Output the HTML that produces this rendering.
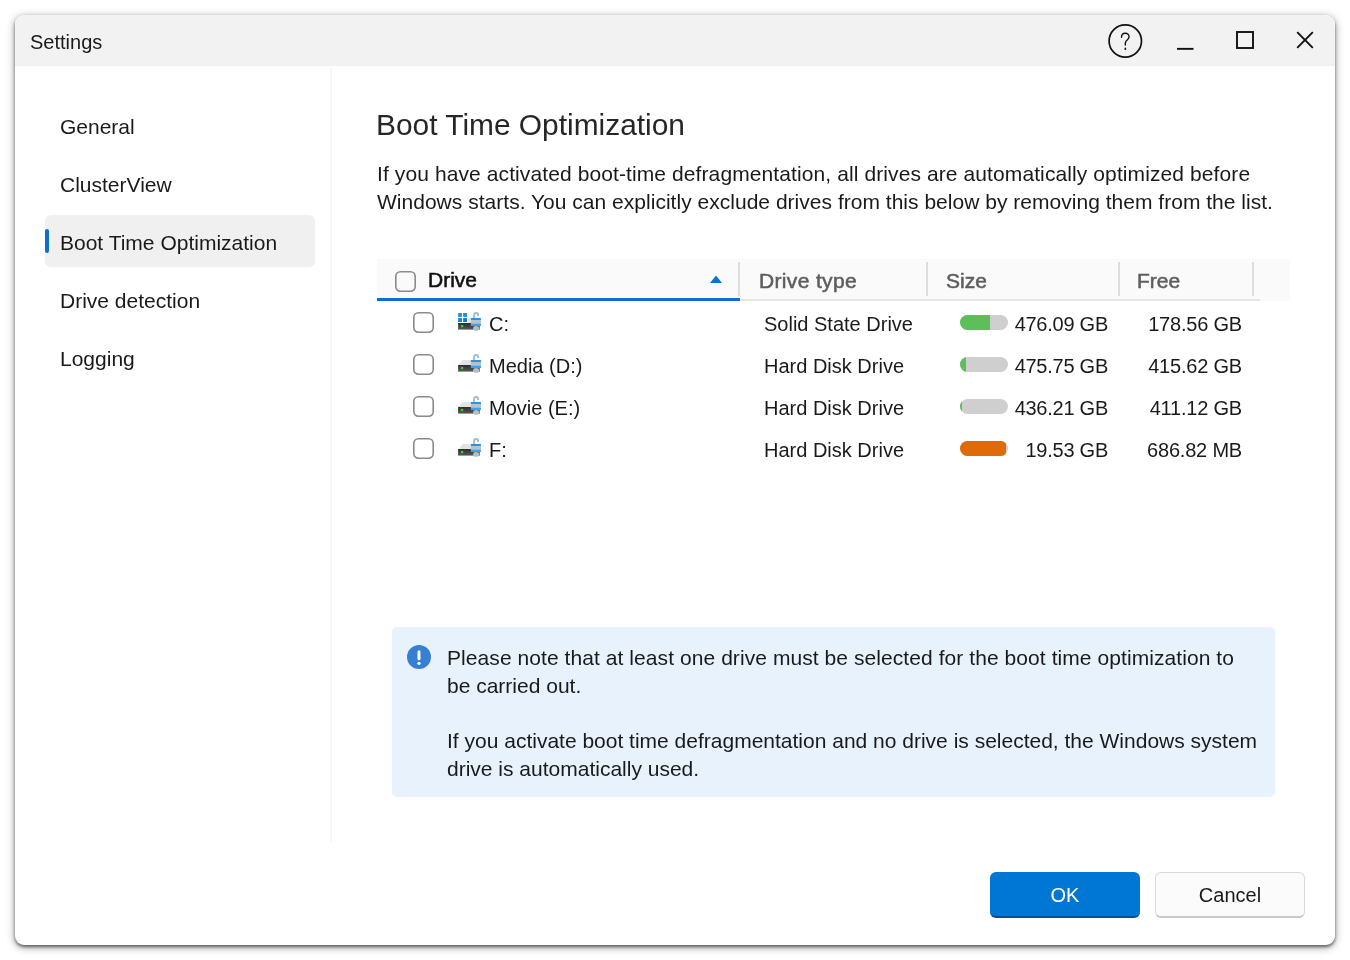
<!DOCTYPE html>
<html><head><meta charset="utf-8">
<style>
*{margin:0;padding:0;box-sizing:border-box}
html,body{width:1350px;height:960px;background:#fff;overflow:hidden;font-family:"Liberation Sans",sans-serif;color:#1a1a1a}
.abs{position:absolute;white-space:nowrap}
.t{will-change:transform}
#win{position:absolute;left:15px;top:15px;width:1320px;height:930px;border-radius:9px;background:#fff;
 box-shadow:0 2px 3px rgba(0,0,0,0.45),0 2px 8px rgba(0,0,0,0.42);overflow:hidden}
#title{position:absolute;left:0;top:0;width:1320px;height:51px;background:#f2f2f2}
.t{position:absolute;white-space:nowrap;line-height:28px}
.nav{font-size:21px}
.cb{position:absolute;width:22px;height:22px}.cb svg{display:block}
.cell{font-size:20px}
.sep{position:absolute;width:2px;top:247px;height:32px;background:#e2e2e2}
.bar{position:absolute;width:48px;height:15px;border-radius:7.5px;background:#cfcfcf;overflow:hidden}
.bar i{position:absolute;left:0;top:0;height:15px;display:block}
</style></head><body>
<div id="win">
  <div id="title"></div>
</div>
<!-- everything below positioned in page coords -->
<div class="t" style="left:30px;top:28px;font-size:20px">Settings</div>
<!-- title buttons -->
<svg class="abs" style="left:1100px;top:15px" width="240" height="51" viewBox="1100 15 240 51">
  <circle cx="1125.3" cy="41" r="16.2" fill="none" stroke="#111" stroke-width="1.7"/>
  <path d="M1121.5 37.3 c0 -2.4 1.6 -4.1 3.8 -4.1 c2.2 0 3.8 1.7 3.8 3.6 c0 1.4 -0.7 2.1 -1.7 3 c-1.3 1.1 -2.1 2 -2.1 3.5 v1.8" fill="none" stroke="#111" stroke-width="1.4" stroke-linecap="round"/>
  <rect x="1124.6" y="47.6" width="1.5" height="2.4" rx="0.6" fill="#111"/>
  <rect x="1177" y="47.9" width="16.5" height="1.9" fill="#111"/>
  <rect x="1237" y="32" width="16" height="16" fill="none" stroke="#111" stroke-width="1.9"/>
  <path d="M1297.2 32.2 L1312.8 47.8 M1312.8 32.2 L1297.2 47.8" stroke="#111" stroke-width="1.9"/>
</svg>

<!-- sidebar -->
<div class="abs" style="left:45px;top:215px;width:270px;height:52px;border-radius:6px;background:#f0f0f0"></div>
<div class="abs" style="left:45px;top:229px;width:4px;height:24px;border-radius:2px;background:#0a6fd1"></div>
<div class="t nav" style="left:59.5px;top:113px">General</div>
<div class="t nav" style="left:59.5px;top:171px">ClusterView</div>
<div class="t nav" style="left:59.5px;top:229px">Boot Time Optimization</div>
<div class="t nav" style="left:59.5px;top:287px">Drive detection</div>
<div class="t nav" style="left:59.5px;top:345px">Logging</div>
<div class="abs" style="left:330px;top:66px;width:2px;height:776px;background:#f7f7f7"></div>

<!-- heading -->
<div class="t" style="left:376px;top:107px;font-size:29.9px;line-height:36px;color:#262626">Boot Time Optimization</div>
<div class="t" style="left:377px;top:160px;font-size:21px;letter-spacing:0.1px">If you have activated boot-time defragmentation, all drives are automatically optimized before</div>
<div class="t" style="left:377px;top:188px;font-size:21px;letter-spacing:0.02px">Windows starts. You can explicitly exclude drives from this below by removing them from the list.</div>

<!-- table header -->
<div class="abs" style="left:377px;top:259px;width:913px;height:42px;background:#fafafa"></div>
<div class="abs" style="left:377px;top:298px;width:363px;height:3px;background:#0a6fd1"></div>
<div class="abs" style="left:740px;top:299px;width:520px;height:2px;background:#e5e5e5"></div>
<div class="cb" style="left:395px;top:271px"><svg width="22" height="22" viewBox="0 0 22 22"><rect x="0.8" y="0.8" width="19.4" height="19.4" rx="4.6" fill="#fafafa" stroke="#8a8a8a" stroke-width="1.6"/></svg></div>
<div class="t" style="left:428px;top:266px;font-size:21px;-webkit-text-stroke:0.55px #111;color:#111">Drive</div>
<svg class="abs" style="left:709px;top:274px" width="14" height="10"><path d="M1 9 L7 1.5 L13 9 Z" fill="#0a74d6"/></svg>
<div class="abs" style="left:738px;top:262px;width:2px;height:34px;background:#dedede"></div>
<div class="abs" style="left:926px;top:262px;width:2px;height:34px;background:#dedede"></div>
<div class="abs" style="left:1118px;top:262px;width:2px;height:34px;background:#dedede"></div>
<div class="abs" style="left:1252px;top:262px;width:2px;height:34px;background:#dedede"></div>
<div class="t" style="left:759px;top:267px;font-size:21px;-webkit-text-stroke:0.55px #5e5e5e;color:#5e5e5e;letter-spacing:0.35px">Drive type</div>
<div class="t" style="left:946px;top:267px;font-size:21px;-webkit-text-stroke:0.55px #5e5e5e;color:#5e5e5e">Size</div>
<div class="t" style="left:1137px;top:267px;font-size:21px;-webkit-text-stroke:0.55px #5e5e5e;color:#5e5e5e">Free</div>

<!-- rows -->
<!--ROWS-->
<div class="cb" style="left:413px;top:312px"><svg width="22" height="22" viewBox="0 0 22 22"><rect x="0.8" y="0.8" width="19.4" height="19.4" rx="4.6" fill="#fff" stroke="#8a8a8a" stroke-width="1.6"/></svg></div>
<svg class="abs" style="left:454px;top:308px" width="32" height="28" viewBox="0 0 32 28"><defs><linearGradient id="g0" x1="0" y1="0" x2="0" y2="1"><stop offset="0" stop-color="#2c2c2c"/><stop offset="1" stop-color="#5a5a5a"/></linearGradient></defs><rect x="4.1" y="5" width="3.9" height="3.9" fill="#1e93e3"/><rect x="9.1" y="5" width="3.9" height="3.9" fill="#1a8ee1"/><rect x="4.1" y="10.1" width="3.9" height="3.9" fill="#0f84dc"/><rect x="9.1" y="10.1" width="3.9" height="3.9" fill="#0a7ad8"/><rect x="13.9" y="10" width="3.2" height="5" fill="#e3e4e6"/><rect x="4.1" y="15" width="21.6" height="6.7" fill="url(#g0)"/><rect x="4.1" y="21" width="21.6" height="0.8" fill="#a0a0a0"/><rect x="6.9" y="16.9" width="2.3" height="2.3" fill="#1fe31f"/><path d="M20.1 10.2 V7 a2 2 0 0 1 4 0 V7.9" fill="none" stroke="#a8bac8" stroke-width="1.9"/><rect x="16.9" y="9.9" width="10.1" height="8" fill="#bcc1c6"/><rect x="16.9" y="9.9" width="10.1" height="2.2" rx="0.6" fill="#2b93e6"/><rect x="16.9" y="15.8" width="10.1" height="2.1" rx="0.6" fill="#3aa3ee"/><ellipse cx="22.1" cy="20.4" rx="3" ry="2.3" fill="#b6bfc8"/></svg>
<div class="t cell" style="left:489px;top:310px">C:</div>
<div class="t cell" style="left:764px;top:310px">Solid State Drive</div>
<div class="bar" style="left:960px;top:315px"><i style="width:30px;background:#5cbf5a"></i></div>
<div class="t cell" style="left:901px;width:207px;text-align:right;letter-spacing:-0.25px;top:310px">476.09 GB</div>
<div class="t cell" style="left:1041px;width:201px;text-align:right;letter-spacing:-0.2px;top:310px">178.56 GB</div>
<div class="cb" style="left:413px;top:354px"><svg width="22" height="22" viewBox="0 0 22 22"><rect x="0.8" y="0.8" width="19.4" height="19.4" rx="4.6" fill="#fff" stroke="#8a8a8a" stroke-width="1.6"/></svg></div>
<svg class="abs" style="left:454px;top:350px" width="32" height="28" viewBox="0 0 32 28"><defs><linearGradient id="g1" x1="0" y1="0" x2="0" y2="1"><stop offset="0" stop-color="#2c2c2c"/><stop offset="1" stop-color="#5a5a5a"/></linearGradient></defs><path d="M4.8 15 L8.6 9.9 L17.2 9.9 L17.2 15 Z" fill="#e2e3e6"/><rect x="4.1" y="15" width="21.6" height="6.7" fill="url(#g1)"/><rect x="4.1" y="21" width="21.6" height="0.8" fill="#a0a0a0"/><rect x="6.9" y="16.9" width="2.3" height="2.3" fill="#1fe31f"/><path d="M20.1 10.2 V7 a2 2 0 0 1 4 0 V7.9" fill="none" stroke="#a8bac8" stroke-width="1.9"/><rect x="16.9" y="9.9" width="10.1" height="8" fill="#bcc1c6"/><rect x="16.9" y="9.9" width="10.1" height="2.2" rx="0.6" fill="#2b93e6"/><rect x="16.9" y="15.8" width="10.1" height="2.1" rx="0.6" fill="#3aa3ee"/><ellipse cx="22.1" cy="20.4" rx="3" ry="2.3" fill="#b6bfc8"/></svg>
<div class="t cell" style="left:489px;top:352px">Media (D:)</div>
<div class="t cell" style="left:764px;top:352px">Hard Disk Drive</div>
<div class="bar" style="left:960px;top:357px"><i style="width:6px;background:#5cbf5a"></i></div>
<div class="t cell" style="left:901px;width:207px;text-align:right;letter-spacing:-0.25px;top:352px">475.75 GB</div>
<div class="t cell" style="left:1041px;width:201px;text-align:right;letter-spacing:-0.2px;top:352px">415.62 GB</div>
<div class="cb" style="left:413px;top:396px"><svg width="22" height="22" viewBox="0 0 22 22"><rect x="0.8" y="0.8" width="19.4" height="19.4" rx="4.6" fill="#fff" stroke="#8a8a8a" stroke-width="1.6"/></svg></div>
<svg class="abs" style="left:454px;top:392px" width="32" height="28" viewBox="0 0 32 28"><defs><linearGradient id="g2" x1="0" y1="0" x2="0" y2="1"><stop offset="0" stop-color="#2c2c2c"/><stop offset="1" stop-color="#5a5a5a"/></linearGradient></defs><path d="M4.8 15 L8.6 9.9 L17.2 9.9 L17.2 15 Z" fill="#e2e3e6"/><rect x="4.1" y="15" width="21.6" height="6.7" fill="url(#g2)"/><rect x="4.1" y="21" width="21.6" height="0.8" fill="#a0a0a0"/><rect x="6.9" y="16.9" width="2.3" height="2.3" fill="#1fe31f"/><path d="M20.1 10.2 V7 a2 2 0 0 1 4 0 V7.9" fill="none" stroke="#a8bac8" stroke-width="1.9"/><rect x="16.9" y="9.9" width="10.1" height="8" fill="#bcc1c6"/><rect x="16.9" y="9.9" width="10.1" height="2.2" rx="0.6" fill="#2b93e6"/><rect x="16.9" y="15.8" width="10.1" height="2.1" rx="0.6" fill="#3aa3ee"/><ellipse cx="22.1" cy="20.4" rx="3" ry="2.3" fill="#b6bfc8"/></svg>
<div class="t cell" style="left:489px;top:394px">Movie (E:)</div>
<div class="t cell" style="left:764px;top:394px">Hard Disk Drive</div>
<div class="bar" style="left:960px;top:399px"><i style="width:2px;background:#5cbf5a"></i></div>
<div class="t cell" style="left:901px;width:207px;text-align:right;letter-spacing:-0.25px;top:394px">436.21 GB</div>
<div class="t cell" style="left:1041px;width:201px;text-align:right;letter-spacing:-0.2px;top:394px">411.12 GB</div>
<div class="cb" style="left:413px;top:438px"><svg width="22" height="22" viewBox="0 0 22 22"><rect x="0.8" y="0.8" width="19.4" height="19.4" rx="4.6" fill="#fff" stroke="#8a8a8a" stroke-width="1.6"/></svg></div>
<svg class="abs" style="left:454px;top:434px" width="32" height="28" viewBox="0 0 32 28"><defs><linearGradient id="g3" x1="0" y1="0" x2="0" y2="1"><stop offset="0" stop-color="#2c2c2c"/><stop offset="1" stop-color="#5a5a5a"/></linearGradient></defs><path d="M4.8 15 L8.6 9.9 L17.2 9.9 L17.2 15 Z" fill="#e2e3e6"/><rect x="4.1" y="15" width="21.6" height="6.7" fill="url(#g3)"/><rect x="4.1" y="21" width="21.6" height="0.8" fill="#a0a0a0"/><rect x="6.9" y="16.9" width="2.3" height="2.3" fill="#1fe31f"/><path d="M20.1 10.2 V7 a2 2 0 0 1 4 0 V7.9" fill="none" stroke="#a8bac8" stroke-width="1.9"/><rect x="16.9" y="9.9" width="10.1" height="8" fill="#bcc1c6"/><rect x="16.9" y="9.9" width="10.1" height="2.2" rx="0.6" fill="#2b93e6"/><rect x="16.9" y="15.8" width="10.1" height="2.1" rx="0.6" fill="#3aa3ee"/><ellipse cx="22.1" cy="20.4" rx="3" ry="2.3" fill="#b6bfc8"/></svg>
<div class="t cell" style="left:489px;top:436px">F:</div>
<div class="t cell" style="left:764px;top:436px">Hard Disk Drive</div>
<div class="bar" style="left:960px;top:441px"><i style="width:46px;background:#e06a08"></i></div>
<div class="t cell" style="left:901px;width:207px;text-align:right;letter-spacing:-0.25px;top:436px">19.53 GB</div>
<div class="t cell" style="left:1041px;width:201px;text-align:right;letter-spacing:-0.2px;top:436px">686.82 MB</div>
<!--/ROWS-->

<!-- info box -->
<div class="abs" style="left:392px;top:627px;width:883px;height:170px;border-radius:5px;background:#e8f2fd"></div>
<svg class="abs" style="left:407px;top:645px" width="24" height="24" viewBox="0 0 24 24">
  <circle cx="12" cy="12" r="12" fill="#3580d2"/>
  <rect x="10.5" y="5.2" width="3" height="10" rx="1.5" fill="#fff"/>
  <circle cx="12" cy="18.3" r="1.6" fill="#fff"/>
</svg>
<div class="t" style="left:447px;top:644px;font-size:21px;letter-spacing:0.07px">Please note that at least one drive must be selected for the boot time optimization to</div>
<div class="t" style="left:447px;top:672px;font-size:21px">be carried out.</div>
<div class="t" style="left:447px;top:727px;font-size:21px">If you activate boot time defragmentation and no drive is selected, the Windows system</div>
<div class="t" style="left:447px;top:755px;font-size:21px">drive is automatically used.</div>

<!-- buttons -->
<div class="abs" style="left:990px;top:872px;width:150px;height:46px;border-radius:6px;background:#0076d5;border-bottom:2px solid #00529e"></div>
<div class="t" style="left:990px;top:881px;width:150px;text-align:center;font-size:20px;color:#fff">OK</div>
<div class="abs" style="left:1155px;top:872px;width:150px;height:46px;border-radius:6px;background:#fbfbfb;border:1px solid #d9d9d9;border-bottom:2px solid #c9c9c9"></div>
<div class="t" style="left:1155px;top:881px;width:150px;text-align:center;font-size:20px;color:#1a1a1a">Cancel</div>
</body></html>
